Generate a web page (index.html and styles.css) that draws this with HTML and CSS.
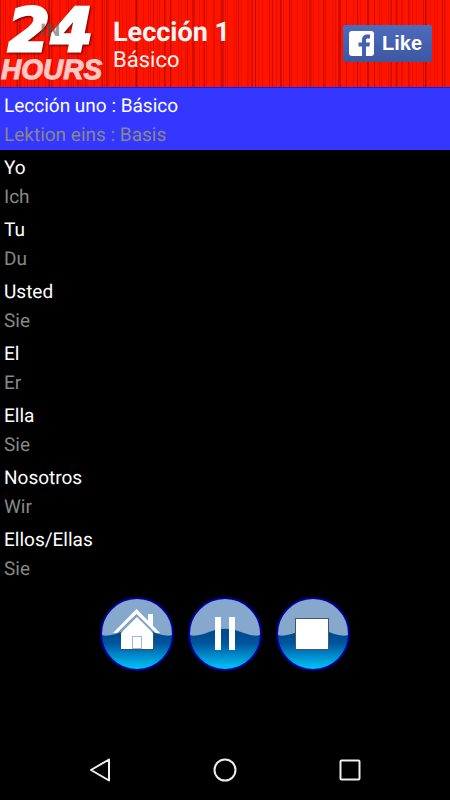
FILE: index.html
```html
<!DOCTYPE html>
<html lang="es">
<head>
  <meta charset="UTF-8">
  <meta name="viewport" content="width=device-width, initial-scale=1.0">
  <title>Lección 1</title>
  <link rel="stylesheet" href="styles.css">
</head>
<body>
  <!-- Header with logo, lesson title and like button -->
  <header>
    <svg class="logo" viewBox="0 0 104 87" role="img" aria-label="In 24 Hours">
      <text class="logo-number" x="8 51" y="51">24</text>
      <text class="logo-in" x="40" y="36">IN</text>
      <text class="logo-hours" x="1" y="79">HOURS</text>
    </svg>
    <div class="title">
      <h1>Lección 1</h1>
      <p>Básico</p>
    </div>
    <button type="button" class="like">
      <svg width="25" height="25" viewBox="0 0 25 25" aria-hidden="true">
        <rect width="25" height="25" rx="3" fill="#fff"/>
        <path d="M13 25V15.500H9.500V11.500H13V9.500C13 5.500 15 3.600 18.500 3.600H21V7.600H19C17.500 7.600 17 8.200 17 9.500V11.500H21L20.400 15.500H17V25Z" fill="#4560ad"/>
      </svg>
      Like
    </button>
  </header>

  <!-- Phrases, Spanish above German -->
  <ul class="phrases">
    <li class="selected"><p>Lección uno : Básico</p><p class="translation">Lektion eins : Basis</p></li>
    <li><p>Yo</p><p class="translation">Ich</p></li>
    <li><p>Tu</p><p class="translation">Du</p></li>
    <li><p>Usted</p><p class="translation">Sie</p></li>
    <li><p>El</p><p class="translation">Er</p></li>
    <li><p>Ella</p><p class="translation">Sie</p></li>
    <li><p>Nosotros</p><p class="translation">Wir</p></li>
    <li><p>Ellos/Ellas</p><p class="translation">Sie</p></li>
  </ul>

  <!-- Player controls -->
  <div class="controls">
    <button type="button" aria-label="Inicio">
      <svg viewBox="0 0 74 74">
        <defs>
          <linearGradient id="glass" x1="0" y1="0" x2="0" y2="1">
            <stop offset="0.5" stop-color="#004a90"/>
            <stop offset="0.63" stop-color="#00559c"/>
            <stop offset="0.82" stop-color="#0091cf"/>
            <stop offset="1" stop-color="#00caf8"/>
          </linearGradient>
          <g id="disc">
            <circle cx="37" cy="37" r="36" fill="url(#glass)"/>
            <path d="M1 37A36 36 0 0 1 73 37C70 41 58 37 50 34C41 31 33 31 24 34C16 37 4 41 1 37Z" fill="#86a8cd"/>
            <circle cx="37" cy="37" r="36" fill="none" stroke="#00009c" stroke-width="2"/>
          </g>
        </defs>
        <use href="#disc"/>
        <path d="M21 52V36L37 20L53 36V52Z" fill="#fff"/>
        <path d="M21 52.500H53.500V36" fill="none" stroke="#36506d"/>
        <path d="M48 27V17H53V33Z" fill="#fff"/>
        <path d="M13 36L36.500 12L60 36H56L36.500 17L17 36Z" fill="#fff"/>
        <path d="M18 36L36.500 18L55 36" fill="none" stroke="#7896b8"/>
        <rect x="32.500" y="39.500" width="9" height="12" fill="#fff" stroke="#9db8dc"/>
      </svg>
    </button>
    <button type="button" aria-label="Pausa">
      <svg viewBox="0 0 74 74">
        <use href="#disc"/>
        <path d="M27 20H33V53H27ZM41 20H47V53H41Z" fill="#fff"/>
      </svg>
    </button>
    <button type="button" aria-label="Detener">
      <svg viewBox="0 0 74 74">
        <use href="#disc"/>
        <rect x="19.500" y="21.500" width="33" height="31" fill="#fff" stroke="#44566a"/>
      </svg>
    </button>
  </div>

  <!-- System navigation bar -->
  <nav>
    <button type="button" aria-label="Atrás">
      <svg viewBox="0 0 24 24"><path d="M21 1.500V22.500L3 12Z"/></svg>
    </button>
    <button type="button" aria-label="Pantalla principal">
      <svg viewBox="0 0 24 24"><circle cx="12" cy="12" r="10.500"/></svg>
    </button>
    <button type="button" aria-label="Recientes">
      <svg viewBox="0 0 24 24"><rect x="2.500" y="2.500" width="19" height="19" rx="1"/></svg>
    </button>
  </nav>
</body>
</html>
```

FILE: styles.css
```css
* {
  box-sizing: border-box;
}
body {
  margin: 0;
  min-height: 100vh;
  display: flex;
  flex-direction: column;
  background-color: #000;
  color: #fff;
  font-family: Roboto, sans-serif;
  text-rendering: geometricPrecision;
}
h1, p {
  margin: 0;
}
button {
  padding: 0;
  border: none;
  background: none;
  cursor: pointer;
}

/* Header, red curtain made of stripes with different periods */
header {
  display: flex;
  align-items: center;
  height: 88px;
  padding-right: 18px;
  border-bottom: 1px solid #0a20ff;
  background-color: #ff1400;
  background-image:
    repeating-linear-gradient(90deg, rgba(90, 0, 0, 0.3) 0 1px, transparent 1px 17px),
    repeating-linear-gradient(90deg, transparent 0 5px, rgba(120, 0, 0, 0.2) 5px 6px, transparent 6px 11px),
    repeating-linear-gradient(90deg, transparent 0 3px, rgba(150, 0, 0, 0.2) 3px 4px, transparent 4px 7px),
    repeating-linear-gradient(90deg, transparent 0 19px, rgba(130, 0, 0, 0.3) 19px 21px, transparent 21px 29px);
}
.logo {
  width: 104px;
  height: 87px;
  flex-shrink: 0;
  fill: #fff;
  font-weight: bold;
}
.logo-number {
  font-family: "DejaVu Sans", sans-serif;
  font-size: 60px;
  font-style: italic;
  stroke: #fff;
  stroke-width: 3px;
  filter: drop-shadow(1px 1px 1px #600);
}
.logo-in {
  font-family: "DejaVu Sans", sans-serif;
  font-size: 17px;
  fill: #555;
  fill-opacity: 0.6;
}
.logo-hours {
  font-family: "Liberation Sans", sans-serif;
  font-size: 28px;
  font-style: italic;
  fill: #ffc8c8;
  stroke: #ffc8c8;
  stroke-width: 1px;
}
.title {
  flex: 1;
  padding-left: 9px;
  padding-top: 5px;
  color: #f4f4f4;
}
.title h1 {
  font-size: 27px;
  line-height: 30px;
}
.title p {
  font-size: 22px;
  line-height: 28px;
}
.like {
  display: flex;
  align-items: center;
  gap: 8px;
  width: 89px;
  height: 37px;
  padding-left: 6px;
  border-radius: 2px;
  background: linear-gradient(#4d6bbd, #3d57a0);
  color: #fff;
  font-family: "Liberation Sans", sans-serif;
  font-size: 20px;
  font-weight: bold;
}

/* Phrase list */
.phrases {
  margin: 0;
  padding: 0;
  list-style: none;
  font-size: 19px;
  line-height: 29px;
}
.phrases li {
  padding: 3px 4px 1px;
}
.phrases .selected {
  background-color: #3337ff;
}
.translation {
  color: #888;
}

/* Round player buttons */
.controls {
  display: flex;
  justify-content: center;
  gap: 14px;
  padding-top: 13px;
}
.controls button {
  width: 74px;
  height: 74px;
  border-radius: 50%;
}
.controls svg {
  display: block;
}

/* Navigation bar */
nav {
  display: flex;
  justify-content: center;
  margin-top: auto;
  padding: 6px 0;
}
nav button {
  width: 125px;
  height: 48px;
}
nav svg {
  display: block;
  width: 24px;
  height: 24px;
  margin: 0 auto;
  fill: none;
  stroke: #eee;
  stroke-width: 2px;
  stroke-linejoin: round;
}
```
